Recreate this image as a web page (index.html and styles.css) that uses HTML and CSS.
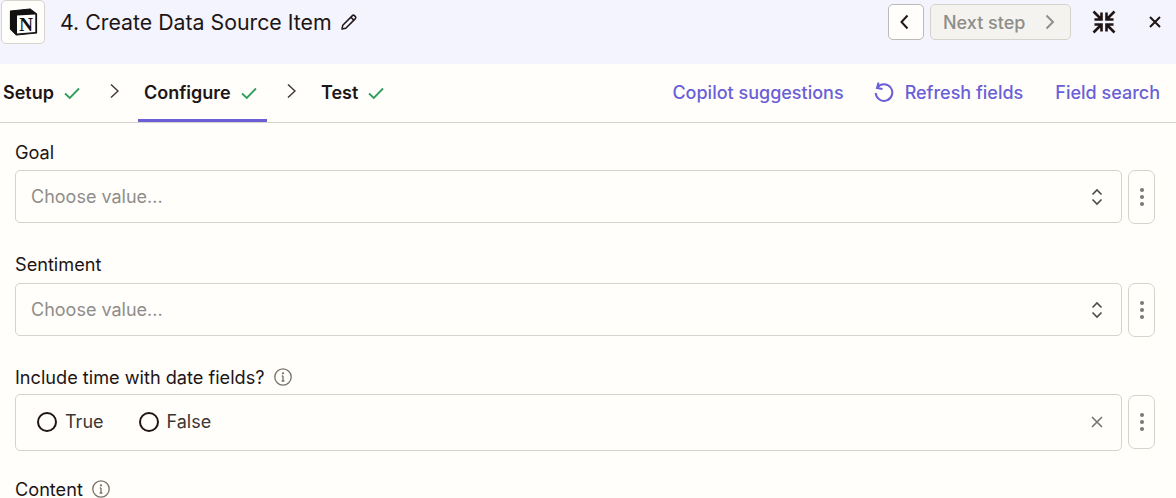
FILE: index.html
```html
<!DOCTYPE html>
<html>
<head>
	<title>Create Data Source Item</title>
	<meta charset="utf-8">
	<link rel="stylesheet" href="styles.css">
</head>
<body>
	<div class="head">
		<div class="logo">
			<svg width="32" height="32" viewBox="0 0 32 32">
				<path d="M3.5 5 L23 3 L29.5 8 V27 L9.5 29 L3.5 23 Z" fill="#111" stroke="#111" stroke-width="1.2" stroke-linejoin="round"/>
				<path d="M10 9.6 L28.3 8.6 V26 L10 27.6 Z" fill="#fff"/>
				<text x="19.2" y="25" text-anchor="middle" class="logo-n">N</text>
			</svg>
		</div>
		<div class="title">4. Create Data Source Item</div>
		<svg class="pencil" width="18" height="18" viewBox="0 0 18 18" fill="none" stroke="#201515" stroke-width="1.5" stroke-linejoin="round"><path d="M2 16 L2.8 12.2 L12.4 2.6 Q13.4 1.7 14.4 2.6 L15.4 3.6 Q16.3 4.6 15.4 5.6 L5.8 15.2 Z M10.9 4.2 L13.8 7.1"/></svg>
		<div class="head-right">
			<button class="nav-btn back"><svg width="10" height="16" viewBox="0 0 10 16" fill="none" stroke="#201515" stroke-width="2"><path d="M7.5 1.5 L1.5 8 L7.5 14.5"/></svg></button>
			<button class="nav-btn next">Next step<svg width="10" height="16" viewBox="0 0 10 16" fill="none" stroke="#8f8d89" stroke-width="1.9"><path d="M1.5 1.5 L8 8 L1.5 14.5"/></svg></button>
			<svg class="collapse" width="24" height="24" viewBox="0 0 24 24" fill="none" stroke="#201515" stroke-width="2.6"><path d="M1.5 1.5 L9 9 M9.5 2.5 V9.5 H2.5 M22.5 1.5 L15 9 M14.5 2.5 V9.5 H21.5 M1.5 22.5 L9 15 M9.5 21.5 V14.5 H2.5 M22.5 22.5 L15 15 M14.5 21.5 V14.5 H21.5"/></svg>
			<svg class="close" width="12" height="12" viewBox="0 0 12 12" fill="none" stroke="#201515" stroke-width="2"><path d="M1 1 L11 11 M11 1 L1 11"/></svg>
		</div>
	</div>

	<div class="tabs">
		<div class="tab first">Setup<svg class="check" width="16" height="13" viewBox="0 0 16 13" fill="none" stroke="#2f9e5b" stroke-width="1.8"><path d="M1 6.5 L5.8 11 L15 1.5"/></svg></div>
		<svg class="sep" width="10" height="16" viewBox="0 0 10 16" fill="none" stroke="#413735" stroke-width="1.5"><path d="M2 1.5 L9 8 L2 14.5"/></svg>
		<div class="tab active">Configure<svg class="check" width="16" height="13" viewBox="0 0 16 13" fill="none" stroke="#2f9e5b" stroke-width="1.8"><path d="M1 6.5 L5.8 11 L15 1.5"/></svg></div>
		<svg class="sep" width="10" height="16" viewBox="0 0 10 16" fill="none" stroke="#413735" stroke-width="1.5"><path d="M2 1.5 L9 8 L2 14.5"/></svg>
		<div class="tab">Test<svg class="check" width="16" height="13" viewBox="0 0 16 13" fill="none" stroke="#2f9e5b" stroke-width="1.8"><path d="M1 6.5 L5.8 11 L15 1.5"/></svg></div>
		<div class="links">
			<span class="copilot">Copilot suggestions</span>
			<span class="refresh"><svg width="20" height="22" viewBox="0 0 20 22" fill="none" stroke="#6a5fd6" stroke-width="2"><path d="M4.5 1.5 L3 7 L8.5 8 M3.2 6.8 A8.3 8.3 0 1 1 1.7 12"/></svg>Refresh fields</span>
			<span>Field search</span>
		</div>
	</div>

	<div class="form">
		<div class="field">
			<div class="label">Goal</div>
			<div class="row">
				<div class="box select">
					<span class="holder">Choose value...</span>
					<svg width="12" height="18" viewBox="0 0 12 18" fill="none" stroke="#4f4a47" stroke-width="1.6"><path d="M1.5 6.5 L6 2 L10.5 6.5 M1.5 11.5 L6 16 L10.5 11.5"/></svg>
				</div>
				<div class="more"><i></i><i></i><i></i></div>
			</div>
		</div>
		<div class="field">
			<div class="label">Sentiment</div>
			<div class="row">
				<div class="box select">
					<span class="holder">Choose value...</span>
					<svg width="12" height="18" viewBox="0 0 12 18" fill="none" stroke="#4f4a47" stroke-width="1.6"><path d="M1.5 6.5 L6 2 L10.5 6.5 M1.5 11.5 L6 16 L10.5 11.5"/></svg>
				</div>
				<div class="more"><i></i><i></i><i></i></div>
			</div>
		</div>
		<div class="field short">
			<div class="label">Include time with date fields?
				<svg class="info" width="18" height="18" viewBox="0 0 18 18" fill="none" stroke="#76716c" stroke-width="1.3"><circle cx="9" cy="9" r="8.2"/><path d="M9 8 V13 M7.8 8 H9 M7.6 13 H10.4"/><circle cx="9" cy="5.3" r="0.5"/></svg>
			</div>
			<div class="row">
				<div class="box radios">
					<label class="radio"><i></i>True</label>
					<label class="radio"><i></i>False</label>
					<svg class="clear" width="12" height="12" viewBox="0 0 12 12" fill="none" stroke="#7b7772" stroke-width="1.7"><path d="M1 1 L11 11 M11 1 L1 11"/></svg>
				</div>
				<div class="more"><i></i><i></i><i></i></div>
			</div>
		</div>
		<div class="field">
			<div class="label">Content
				<svg class="info" width="18" height="18" viewBox="0 0 18 18" fill="none" stroke="#76716c" stroke-width="1.3"><circle cx="9" cy="9" r="8.2"/><path d="M9 8 V13 M7.8 8 H9 M7.6 13 H10.4"/><circle cx="9" cy="5.3" r="0.5"/></svg>
			</div>
		</div>
	</div>
</body>
</html>
```

FILE: styles.css
```css
*{margin:0;padding:0;box-sizing:border-box;}
html,body{height:498px;overflow:hidden;}
body{background:#fffefb;color:#201515;font-family:Inter,"Liberation Sans",sans-serif;font-size:18px;}

.head{height:64px;background:#f4f4fe;display:flex;align-items:flex-start;padding-left:1px;}
.logo{width:44px;height:44px;background:#fffefb;border:1px solid #d7d3cc;border-radius:5px;display:flex;align-items:center;justify-content:center;}
.logo-n{font-family:"Liberation Serif",serif;font-size:19px;font-weight:700;fill:#111;}
.title{margin-left:15px;margin-top:8px;font-size:21.3px;line-height:28px;}
.pencil{margin-left:8px;margin-top:13px;}
.head-right{margin-left:auto;display:flex;align-items:flex-start;padding-right:15px;}
.nav-btn{height:36px;margin-top:4px;border:1px solid #bdb9b4;border-radius:5px;background:#fffefb;display:flex;align-items:center;justify-content:center;font-family:inherit;font-size:18px;}
.back{width:36px;padding-right:2px;}
.next{width:141px;margin-left:6px;background:#f4f3f0;border-color:#d7d3cc;color:#8f8d89;justify-content:space-between;padding:0 15px 0 12px;font-weight:500;}
.collapse{margin-left:21px;margin-top:10px;}
.close{margin-left:33px;margin-top:16px;}

.tabs{height:59px;border-bottom:1px solid #d7d3cc;display:flex;align-items:center;padding-left:3px;padding-right:16px;}
.tab{height:58px;display:flex;align-items:center;font-weight:600;line-height:58px;}
.tab.active{width:129px;padding-left:6px;border-bottom:3px solid #6a5fd6;padding-top:3px;}
.check{margin-left:10px;}
.sep{margin-left:29px;margin-right:19px;margin-top:-4px;}
.tab.active+.sep{margin-left:19px;margin-right:25px;}
.links{margin-left:auto;display:flex;align-items:center;gap:32px;color:#6a5fd6;font-weight:500;padding-bottom:2px;}
.copilot{margin-right:-2px;}
.refresh{display:flex;align-items:center;gap:11px;}

.form{padding:0 21px 0 15px;}
.field{margin-bottom:12px;}
.label{height:47px;padding-top:17px;font-size:18.15px;line-height:22px;display:flex;align-items:flex-start;}
.field:first-child .label{padding-top:18px;}
.short{margin-bottom:10px;}
.short .label{height:45px;}
.info{margin-left:9px;margin-top:2px;}
.row{display:flex;gap:6px;}
.box{flex:1;border:1px solid #d7d3cc;border-radius:5px;display:flex;align-items:center;padding:0 18px 0 15px;}
.select{height:53px;justify-content:space-between;}
.holder{color:#8f8d89;}
.radios{height:57px;gap:35px;padding-left:21px;padding-bottom:2px;}
.radio{display:flex;align-items:center;gap:8px;color:#3d3633;}
.radio i{width:20px;height:20px;border:2px solid #201515;border-radius:50%;}
.clear{margin-left:auto;}
.more{width:27px;height:54px;border:1px solid #d7d3cc;border-radius:7px;display:flex;flex-direction:column;align-items:center;justify-content:center;gap:3px;}
.more i{width:4px;height:4px;background:#7b7772;border-radius:50%;}
.radios+.more{margin-top:1px;}
```
